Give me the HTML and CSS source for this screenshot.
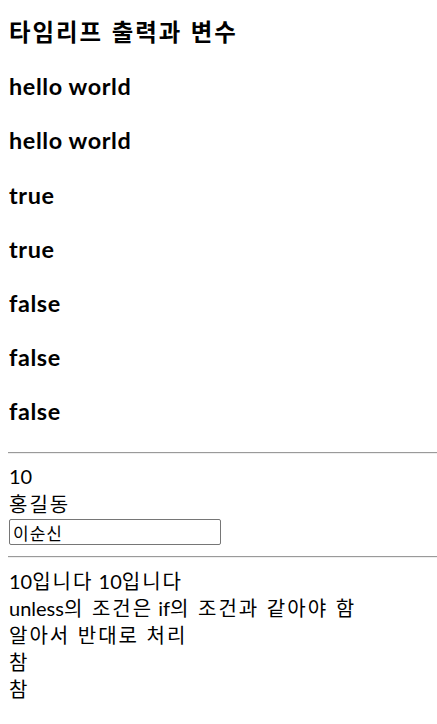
FILE: index.html
```html
<!DOCTYPE html>
<html lang="ko">
<head>
<meta charset="utf-8">
<title>타임리프 출력과 변수</title>
<link rel="stylesheet" href="styles.css">
</head>
<body>
<h3 class="heading"><span class="ko-b">타임리프 출력과 변수</span></h3>
<h3 class="heading">hello world</h3>
<h3 class="heading">hello world</h3>
<h3 class="heading">true</h3>
<h3 class="heading">true</h3>
<h3 class="heading">false</h3>
<h3 class="heading">false</h3>
<h3 class="heading">false</h3>
<hr class="rule">
<div class="line">10</div>
<div class="line"><span class="ko">홍길동</span></div>
<div class="input-row"><input class="field" type="text" value="이순신"></div>
<hr class="rule">
<div class="line">10<span class="ko">입니다</span> 10<span class="ko">입니다</span></div>
<div class="line">unless<span class="ko">의 조건은</span> if<span class="ko">의 조건과 같아야 함</span></div>
<div class="line"><span class="ko">알아서 반대로 처리</span></div>
<div class="line"><span class="ko">참</span></div>
<div class="line"><span class="ko">참</span></div>
</body>
</html>
```
FILE: styles.css
```css
html, body {
  background: #ffffff;
}
body {
  margin: 0 0 8px 8px;
  font-family: Lato, "Noto Sans CJK KR", sans-serif;
  font-size: 20px;
  line-height: 27px;
  color: #000000;
}
.heading {
  font-family: Lato, "Noto Sans CJK KR", sans-serif;
  font-size: 23.4px;
  line-height: 26.7px;
  padding-bottom: 9.1px;
  padding-left: 1px;
  font-weight: bold;
  letter-spacing: 0.6px;
  margin: 18.3px 0;
}
.ko-b {
  font-family: "Noto Sans CJK KR", sans-serif;
  letter-spacing: 2px;
}
.rule {
  margin: 9px 0;
  border: none;
  border-top: 1px solid #9a9a9a;
  border-bottom: 1px solid #eeeeee;
  height: 0;
}
.line {
  height: 27px;
  padding-left: 1px;
  white-space: nowrap;
}
.ko {
  font-family: "Noto Sans CJK KR", sans-serif;
  letter-spacing: 2px;
}
.input-row {
  padding: 2px 0;
}
.field {
  display: block;
  box-sizing: border-box;
  width: 212px;
  height: 26px;
  margin: 0 0 0 1px;
  padding: 0 3px;
  border: 1px solid #767676;
  border-radius: 2px;
  font-family: "Noto Sans CJK KR", sans-serif;
  font-size: 17px;
  letter-spacing: 1px;
  color: #000000;
  background: #ffffff;
}
```
